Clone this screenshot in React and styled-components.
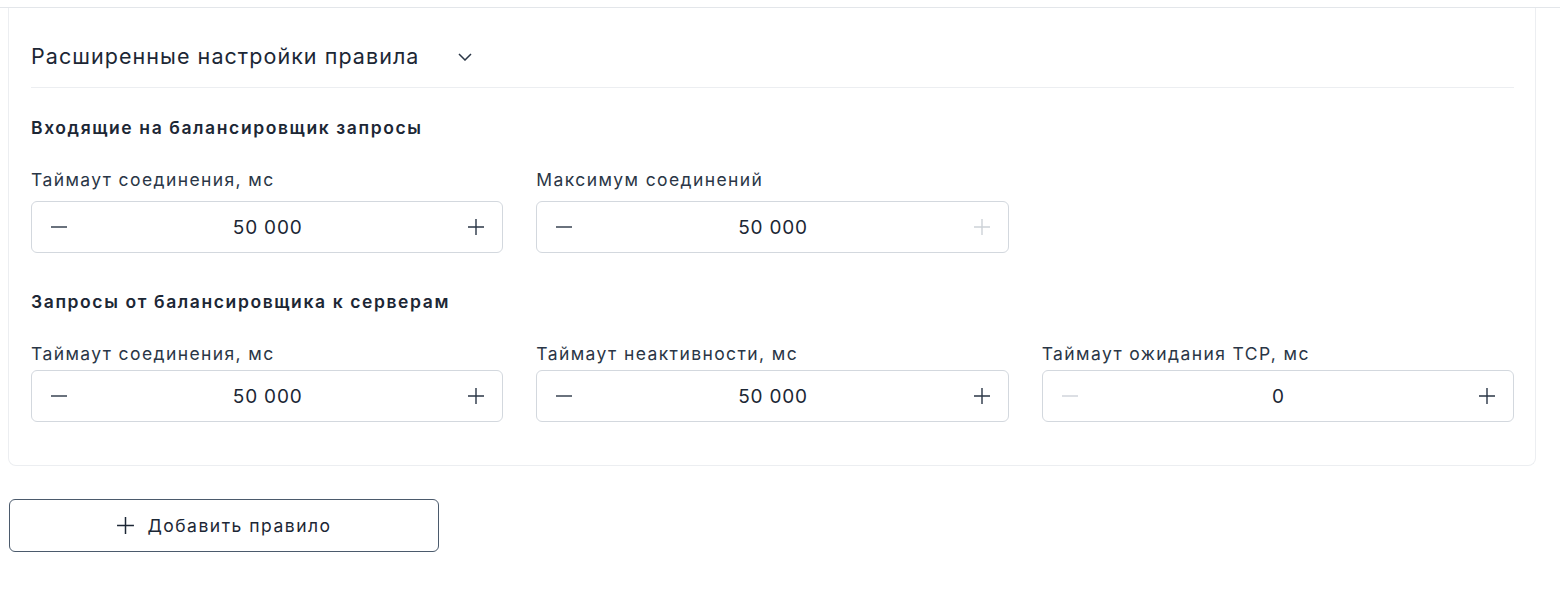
import React from "react";
import styled, { createGlobalStyle } from "styled-components";

const GlobalStyle = createGlobalStyle`
  body {
    margin: 0;
    background: #ffffff;
    font-family: Inter, "Noto Sans", sans-serif;
    color: #1c2735;
  }
`;

const TopLine = styled.div`
  margin-top: 7px;
  height: 1px;
  background: #e3e6ea;
`;

const Wrapper = styled.div`
  padding: 0 24px 0 8px;
`;

const Card = styled.div`
  border: 1px solid #eceef1;
  border-top: none;
  border-radius: 0 0 8px 8px;
  padding: 0 21px 43px 22px;
`;

const Header = styled.div`
  display: flex;
  align-items: center;
  gap: 39px;
  padding: 35px 0 18px;
  border-bottom: 1px solid #eceef1;
`;

const HeaderTitle = styled.div`
  font-size: 21.5px;
  line-height: 26px;
  color: #1c2735;
  letter-spacing: 1.05px;
`;

const Chevron = styled.svg`
  width: 14px;
  height: 8px;
  margin-top: 2px;
`;

const Section = styled.div`
  padding-top: ${(p) => p.$top}px;
`;

const SectionTitle = styled.div`
  font-size: 17.5px;
  font-weight: 600;
  line-height: 20px;
  color: #1c2735;
  letter-spacing: 1.6px;
`;

const Grid = styled.div`
  display: grid;
  grid-template-columns: repeat(3, 1fr);
  column-gap: 33px;
  margin-top: 31px;
`;

const Field = styled.div`
  display: flex;
  flex-direction: column;
  gap: ${(p) => p.$gap}px;
`;

const Label = styled.div`
  font-size: 17.5px;
  line-height: 22px;
  color: #2a3646;
  letter-spacing: 1.4px;
`;

const Stepper = styled.div`
  display: flex;
  align-items: center;
  height: 50px;
  border: 1px solid #d3d8de;
  border-radius: 6px;
  padding: 0 16px 0 17px;
`;

const StepButton = styled.button`
  display: flex;
  align-items: center;
  justify-content: center;
  width: 20px;
  height: 20px;
  padding: 0;
  border: none;
  background: none;
  color: ${(p) => (p.disabled ? "#cdd2d8" : "#2a3646")};
`;

const Value = styled.div`
  flex: 1;
  text-align: center;
  font-size: 19px;
  color: #1c2735;
  letter-spacing: 0.8px;
`;

const AddButton = styled.button`
  display: flex;
  align-items: center;
  justify-content: center;
  gap: 12px;
  margin: 33px 0 0 1px;
  width: 430px;
  height: 53px;
  border: 1px solid #4b5a6c;
  border-radius: 6px;
  background: #ffffff;
  font-family: Inter, "Noto Sans", sans-serif;
  font-size: 17.5px;
  color: #1c2735;
  letter-spacing: 1.5px;
`;

const Minus = () => (
  <svg width="18" height="18" viewBox="0 0 18 18">
    <path d="M1 9h16" stroke="currentColor" strokeWidth="1.4" />
  </svg>
);

const Plus = ({ size = 18 }) => (
  <svg width={size} height={size} viewBox="0 0 18 18">
    <path d="M1 9h16M9 1v16" stroke="currentColor" strokeWidth="1.4" />
  </svg>
);

const NumberField = ({ label, value, minusOff, plusOff, gap }) => (
  <Field $gap={gap}>
    <Label>{label}</Label>
    <Stepper>
      <StepButton disabled={minusOff}>
        <Minus />
      </StepButton>
      <Value>{value}</Value>
      <StepButton disabled={plusOff}>
        <Plus />
      </StepButton>
    </Stepper>
  </Field>
);

const App = () => (
  <>
    <GlobalStyle />
    <TopLine />
    <Wrapper>
      <Card>
        <Header>
          <HeaderTitle>Расширенные настройки правила</HeaderTitle>
          <Chevron viewBox="0 0 14 8">
            <path d="M1 1l6 6 6-6" fill="none" stroke="#2a3646" strokeWidth="1.5" />
          </Chevron>
        </Header>
        <Section $top={30}>
          <SectionTitle>Входящие на балансировщик запросы</SectionTitle>
          <Grid>
            <NumberField label="Таймаут соединения, мс" value="50 000" gap={10} />
            <NumberField label="Максимум соединений" value="50 000" plusOff gap={10} />
          </Grid>
        </Section>
        <Section $top={39}>
          <SectionTitle>Запросы от балансировщика к серверам</SectionTitle>
          <Grid>
            <NumberField label="Таймаут соединения, мс" value="50 000" gap={5} />
            <NumberField label="Таймаут неактивности, мс" value="50 000" gap={5} />
            <NumberField label="Таймаут ожидания TCP, мс" value="0" minusOff gap={5} />
          </Grid>
        </Section>
      </Card>
      <AddButton>
        <Plus size={19} />
        Добавить правило
      </AddButton>
    </Wrapper>
  </>
);

export default App;
